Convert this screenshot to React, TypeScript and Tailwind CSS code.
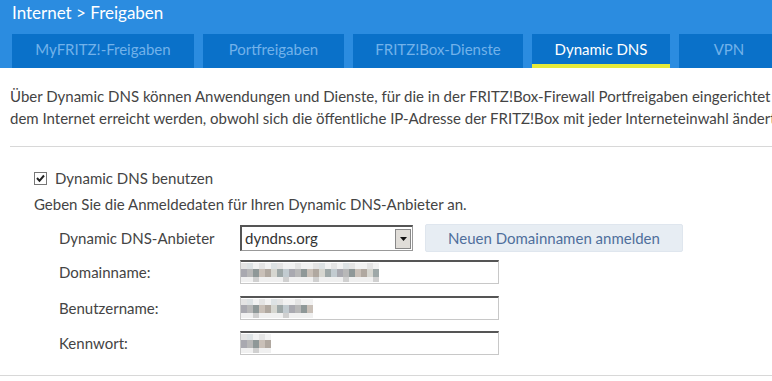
import React from "react";

const font = { fontFamily: '"Source Sans Pro", Lato, "Open Sans", sans-serif' };

function Blur({ w }: { w: number }) {
  const cols = ["#b8b8b8", "#9ea8a8", "#c9c0b8", "#a9a9b0", "#d6d6d0", "#8f9898", "#c2cbd0", "#b0a8a0"];
  const cells = Math.round(w / 6);
  return (
    <div className="flex flex-col">
      <div className="flex h-[6px]">
        {Array.from({ length: cells }).map((_, i) => (
          <div key={i} className="w-[6px] h-[6px]" style={{ background: i % 3 === 0 ? "#e4e4e4" : i % 4 === 1 ? "#dde2e4" : "#f2f2f2" }} />
        ))}
      </div>
      <div className="flex h-[8px]">
        {Array.from({ length: cells }).map((_, i) => (
          <div key={i} className="w-[6px] h-[8px]" style={{ background: cols[(i * 5 + 3) % cols.length] }} />
        ))}
      </div>
      <div className="flex h-[5px]">
        {Array.from({ length: cells }).map((_, i) => (
          <div key={i} className="w-[6px] h-[5px]" style={{ background: i % 5 === 2 ? "#d0d0d0" : "#f0f0f0" }} />
        ))}
      </div>
    </div>
  );
}

function Input({ blur }: { blur: number }) {
  return (
    <div className="w-[259px] h-[24px] bg-white border border-[#c8c8c8] border-t-2 border-t-[#555] flex items-start pt-[1px]">
      <Blur w={blur} />
    </div>
  );
}

export default function App() {
  return (
    <div className="w-[772px] h-[381px] overflow-hidden bg-white text-[#444]" style={font}>
      <div className="bg-[#2b8ce0] h-[68px] flex flex-col">
        <div className="h-[34px] pl-[12px] pt-[1px] text-white text-[17px] leading-[24px]">Internet &gt; Freigaben</div>
        <div className="flex gap-[9px] pl-[12px] h-[34px]">
          {[
            ["MyFRITZ!-Freigaben", 182],
            ["Portfreigaben", 141],
            ["FRITZ!Box-Dienste", 170],
            ["Dynamic DNS", 138],
            ["VPN", 100],
          ].map(([t, w], i) => (
            <div
              key={i}
              className={
                "bg-[#0a71c9] flex items-center justify-center text-[15px] shrink-0 relative " +
                (i === 3 ? "text-white" : "text-[#72b2ea]")
              }
              style={{ width: w as number }}
            >
              <span className="-mt-[4px]">{t}</span>
              {i === 3 && <div className="absolute left-0 right-0 bottom-0 h-[4px] bg-[#e6ea3a]" />}
            </div>
          ))}
        </div>
      </div>
      <div className="pl-[10px] pt-[17px] text-[15px] leading-[22px] whitespace-nowrap">
        <div>Über Dynamic DNS können Anwendungen und Dienste, für die in der FRITZ!Box-Firewall Portfreigaben eingerichtet wurden,</div>
        <div>dem Internet erreicht werden, obwohl sich die öffentliche IP-Adresse der FRITZ!Box mit jeder Interneteinwahl ändert.</div>
      </div>
      <div className="ml-[10px] mt-[17px] h-[1px] bg-[#d8d8d8]" />
      <div className="pl-[34px] pt-[20px] text-[15px]">
        <div className="flex items-center h-[22px]">
          <div className="w-[13px] h-[13px] border border-[#777] bg-white flex items-center justify-center mr-[8px]">
            <svg width="9" height="9" viewBox="0 0 9 9">
              <path d="M1 4 L3.5 6.8 L8 1.5" stroke="#222" strokeWidth="2" fill="none" />
            </svg>
          </div>
          <span>Dynamic DNS benutzen</span>
        </div>
        <div className="mt-[4px] h-[22px] leading-[22px]">Geben Sie die Anmeldedaten für Ihren Dynamic DNS-Anbieter an.</div>
        <div className="pl-[25px] mt-[8px] flex flex-col">
          <div className="flex items-center h-[30px]">
            <div className="w-[181px]">Dynamic DNS-Anbieter</div>
            <div className="w-[173px] h-[26px] border border-[#999] border-t-2 border-t-[#555] border-l-2 border-l-[#555] bg-white flex items-center justify-between">
              <span className="pl-[3px] text-[15px] text-[#333]">dyndns.org</span>
              <div className="w-[16px] h-[20px] mr-[1px] bg-[#e0ddd8] border border-[#888] flex items-center justify-center">
                <svg width="7" height="4" viewBox="0 0 7 4"><path d="M0 0 H7 L3.5 4 Z" fill="#111" /></svg>
              </div>
            </div>
            <div className="ml-[12px] w-[258px] h-[28px] rounded-[2px] bg-[#e7edf3] border border-[#dfe6ee] text-[#4f6f9c] flex items-center justify-center">
              Neuen Domainnamen anmelden
            </div>
          </div>
          <div className="flex items-center h-[24px] mt-[7px]">
            <div className="w-[181px]">Domainname:</div>
            <Input blur={136} />
          </div>
          <div className="flex items-center h-[24px] mt-[12px]">
            <div className="w-[181px]">Benutzername:</div>
            <Input blur={70} />
          </div>
          <div className="flex items-center h-[24px] mt-[11px]">
            <div className="w-[181px]">Kennwort:</div>
            <Input blur={30} />
          </div>
        </div>
      </div>
      <div className="ml-[0px] mt-[20px] h-[1px] bg-[#d8d8d8]" />
    </div>
  );
}
